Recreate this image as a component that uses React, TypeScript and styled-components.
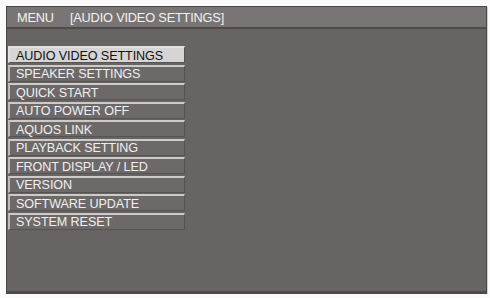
import React from "react";
import styled, { createGlobalStyle } from "styled-components";

const Global = createGlobalStyle`
  html, body { margin: 0; padding: 0; background: #fbfbfb; }
  body { font-family: "Liberation Sans", Arial, sans-serif; }
`;

const Page = styled.div`
  padding: 6px 0 0 6px;
`;

const Frame = styled.div`
  width: 479px;
  height: 286px;
  border: 1px solid #4a4646;
  box-shadow: 1px 1px 0 #cfcfcf;
  display: flex;
  flex-direction: column;
  background: #686464;
`;

const Header = styled.div`
  height: 20px;
  background: #7a7575;
  border-bottom: 2px solid #4f4b4b;
  display: flex;
  align-items: center;
  gap: 16px;
  padding-left: 10px;
  color: #f2f2f2;
  font-size: 12.8px;
  letter-spacing: -0.2px;
`;

const Body = styled.div`
  flex: 1;
  padding: 17px 0 0 1px;
  border-bottom: 2px solid #4f4b4b;
`;

const List = styled.div`
  width: 177px;
  display: flex;
  flex-direction: column;
  gap: 1.5px;
`;

const Item = styled.div<{ $active?: boolean }>`
  height: 14px;
  display: flex;
  align-items: center;
  padding: 1px 0 0 6px;
  box-sizing: content-box;
  height: 13px;
  font-size: 12.6px;
  letter-spacing: -0.1px;
  background: ${(p) => (p.$active ? "#d6d4d4" : "#6d6969")};
  color: ${(p) => (p.$active ? "#111" : "#f0f0f0")};
  border-top: 2px solid ${(p) => (p.$active ? "#e2e0e0" : "#cdcaca")};
  border-left: 2px solid ${(p) => (p.$active ? "#e2e0e0" : "#bdbaba")};
  border-right: 1px solid #575353;
  border-bottom: 1px solid #575353;
`;

const items = [
  "AUDIO VIDEO SETTINGS",
  "SPEAKER SETTINGS",
  "QUICK START",
  "AUTO POWER OFF",
  "AQUOS LINK",
  "PLAYBACK SETTING",
  "FRONT DISPLAY / LED",
  "VERSION",
  "SOFTWARE UPDATE",
  "SYSTEM RESET",
];

export default function App() {
  return (
    <Page>
      <Global />
      <Frame>
        <Header>
          <span>MENU</span>
          <span>[AUDIO VIDEO SETTINGS]</span>
        </Header>
        <Body>
          <List>
            {items.map((t, i) => (
              <Item key={t} $active={i === 0}>
                {t}
              </Item>
            ))}
          </List>
        </Body>
      </Frame>
    </Page>
  );
}
